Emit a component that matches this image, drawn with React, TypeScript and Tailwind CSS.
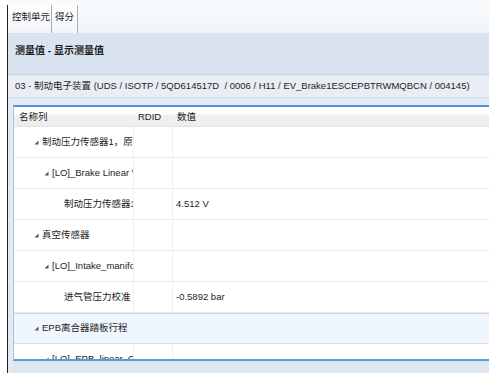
import React from "react";

const Tri = () => (
  <svg width="5" height="5" viewBox="0 0 5 5" className="shrink-0">
    <polygon points="4.5,0.5 4.5,4.5 0.5,4.5" fill="#555" />
  </svg>
);

type Row = { level: number; name: string; value?: string; hl?: boolean; tri: boolean };

const rows: Row[] = [
  { level: 1, name: "制动压力传感器1，原始值", tri: true },
  { level: 2, name: "[LO]_Brake Linear Voltage", tri: true },
  { level: 3, name: "制动压力传感器1", value: "4.512 V", tri: false },
  { level: 1, name: "真空传感器", tri: true },
  { level: 2, name: "[LO]_Intake_manifold", tri: true },
  { level: 3, name: "进气管压力校准", value: "-0.5892 bar", tri: false },
  { level: 1, name: "EPB离合器踏板行程", tri: true, hl: true },
  { level: 2, name: "[LO]_EPB_linear_Output", tri: true },
];

const padFor = (r: Row) =>
  r.level === 1 ? "pl-[20px]" : r.level === 2 ? "pl-[30px]" : "pl-[50px]";

export default function App() {
  return (
    <div
      className="w-[496px] h-[373px] bg-white overflow-hidden text-[#1e1e1e]"
      style={{ fontFamily: '"Liberation Sans", "Noto Sans CJK SC", sans-serif' }}
    >
      <div className="ml-[7px] w-[482px] h-[373px] flex flex-col">
        {/* tab strip */}
        <div className="h-[33px] flex items-end bg-[linear-gradient(to_bottom,#fafbfd,#eef3f8)]">
          <div className="h-[28px] w-[45px] border-l border-[#222] border-r border-r-[#a4adb8] bg-[linear-gradient(to_bottom,#ffffff,#f1f4f8)] flex items-center pl-[4px] pb-[4px] text-[9.5px] leading-none whitespace-nowrap">
            控制单元
          </div>
          <div className="h-[28px] w-[26px] border-r border-[#a4adb8] bg-[linear-gradient(to_bottom,#ffffff,#f1f4f8)] flex items-center pl-[3px] pb-[4px] text-[9.5px] leading-none whitespace-nowrap">
            得分
          </div>
        </div>
        {/* body */}
        <div className="flex-1 flex flex-col border-l border-[#222] bg-[#dfe8f2]">
          <div className="h-[42px] bg-[#dae4f0] border-b border-[#c6d3e2] pl-[7px] pt-[12px] text-[10px] font-bold leading-[12px] whitespace-nowrap">
            测量值 - 显示测量值
          </div>
          <div className="h-[23px] bg-[#e9eef5] border-b border-[#cfd8e4] flex items-center pl-[7px] text-[9.5px] whitespace-nowrap overflow-hidden">
            03 - 制动电子装置 (UDS / ISOTP / 5QD614517D &nbsp;/ 0006 / H11 / EV_Brake1ESCEPBTRWMQBCN / 004145)
          </div>
          <div className="h-[7px] bg-[#e3eaf3]" />
          <div className="flex-1 flex bg-[#dde7f2]">
            <div className="w-[5px] bg-[#e3eaf3]" />
            <div className="flex-1 flex flex-col">
              <div className="h-[256px] bg-white border-t-2 border-t-[#4f90d8] border-b-2 border-b-[#5a98da] border-l border-l-[#a9c3e2] overflow-hidden flex flex-col text-[9.5px]">
                <div className="h-[20px] shrink-0 flex bg-[linear-gradient(to_bottom,#ffffff_35%,#f0f0f0_45%,#ededed)] border-b border-[#e3e3e3]">
                  <div className="w-[120px] pl-[5px] flex items-center pt-[2px]">名称列</div>
                  <div className="w-[39px] pl-[4px] flex items-center pt-[2px]">RDID</div>
                  <div className="flex-1 pl-[4px] flex items-center pt-[2px]">数值</div>
                </div>
                {rows.map((r, i) => (
                  <div
                    key={i}
                    className={
                      "h-[31px] shrink-0 flex border-b " +
                      (r.hl
                        ? "bg-[#f0f6fd] border-b-[#d6dfeb] border-t border-t-[#cdd6ec]"
                        : "border-b-[#ebebeb]")
                    }
                  >
                    <div
                      className={
                        "w-[120px] flex items-center gap-[3px] overflow-hidden whitespace-nowrap " +
                        padFor(r) +
                        (r.hl ? "" : " border-r border-[#f0f0f0]")
                      }
                    >
                      {r.tri && <Tri />}
                      <span>{r.name}</span>
                    </div>
                    <div className={"w-[39px] " + (r.hl ? "" : "border-r border-[#f0f0f0]")} />
                    <div className="flex-1 flex items-center pl-[3px] whitespace-nowrap">
                      {r.value ?? ""}
                    </div>
                  </div>
                ))}
              </div>
            </div>
          </div>
        </div>
      </div>
    </div>
  );
}
